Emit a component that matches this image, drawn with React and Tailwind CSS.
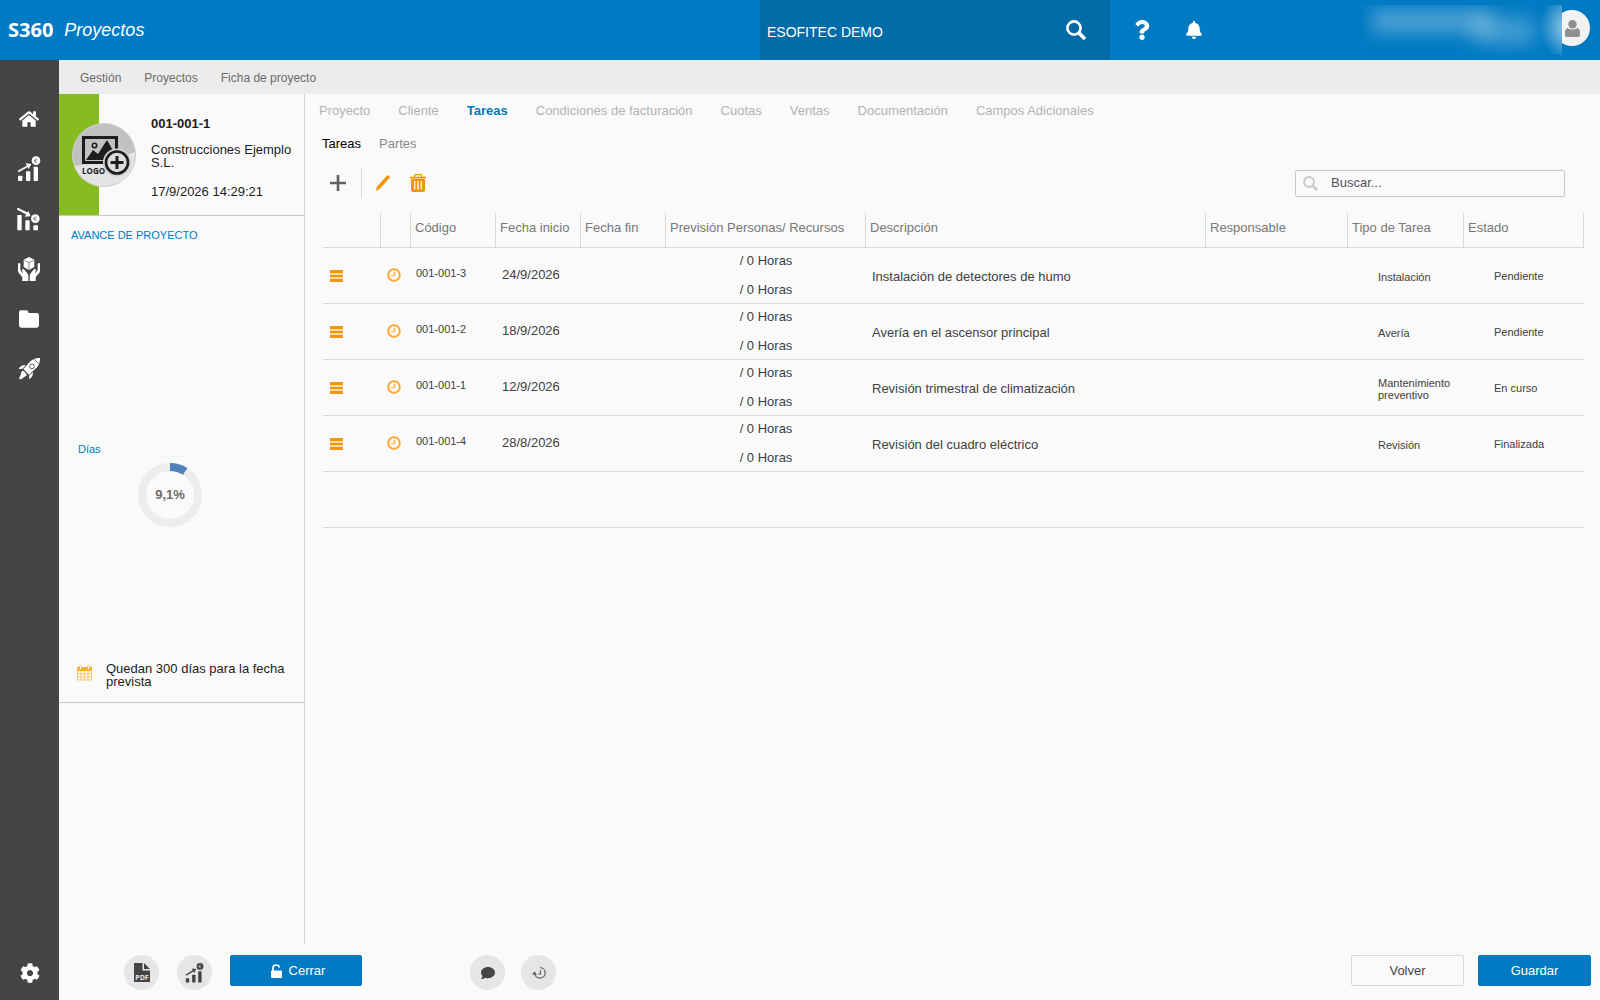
import React from "react";
import { FaHome, FaQuestion, FaBell, FaComment, FaCog } from "react-icons/fa";

function BarsUpIcon({ coinText = "#454545", className }) {
  return (
    <svg viewBox="0 0 72 76" className={className} fill="currentColor" aria-hidden="true">
      <rect x="3" y="58" width="13" height="16" rx="2" />
      <rect x="27" y="45" width="13" height="29" rx="2" />
      <rect x="50" y="31" width="13" height="43" rx="2" />
      <path d="M5 45 34 28" stroke="currentColor" strokeWidth="5" strokeLinecap="round" />
      <path d="M26 21l17 2-8 15z" />
      <circle cx="57" cy="13" r="13" />
      <path d="M61 9a5 5 0 1 0 0 8M51 13h7" fill="none" stroke={coinText} strokeWidth="2" />
    </svg>
  );
}

function BarsDownIcon({ className }) {
  return (
    <svg viewBox="0 0 72 76" className={className} fill="currentColor" aria-hidden="true">
      <rect x="1" y="26" width="13" height="46" rx="2" />
      <rect x="25" y="42" width="13" height="30" rx="2" />
      <rect x="49" y="57" width="14" height="15" rx="2" />
      <path d="M3 8 33 23" stroke="currentColor" strokeWidth="6" strokeLinecap="round" />
      <path d="M34 14l7 16-18 1z" />
      <circle cx="55" cy="37" r="15" fill="#454545" />
      <circle cx="55" cy="37" r="13" />
      <path d="M59 33a5 5 0 1 0 0 8M49 37h7" fill="none" stroke="#454545" strokeWidth="2" />
    </svg>
  );
}

function HandsIcon({ className }) {
  return (
    <svg viewBox="0 0 66 72" className={className} fill="currentColor" aria-hidden="true">
      <path d="M33 0 49 8v22L33 39 17 30V8z" />
      <path d="M19 10l14 7 14-7M33 17v21" fill="none" stroke="#454545" strokeWidth="1.800" />
      <path d="M0 22q0-4 3.500-4T7 22v17l6 8q1 1 2-1l-3-5q-1-4 3-5 2-1 5 3l8 10q3 4 3 9v14H13V61L2 47Q0 45 0 41z" />
      <path d="M66 22q0-4-3.500-4T59 22v17l-6 8q-1 1-2-1l3-5q1-4-3-5-2-1-5 3l-8 10q-3 4-3 9v14h18V61l11-14q2-2 2-6z" />
    </svg>
  );
}

function FolderIcon({ className }) {
  return (
    <svg viewBox="0 0 60 52" className={className} fill="currentColor" aria-hidden="true">
      <path d="M6 0h16q5 0 6 5l1 3h24q7 0 7 7v29q0 8-8 8H8q-8 0-8-8V6q0-6 6-6z" />
    </svg>
  );
}

function RocketIcon({ className }) {
  return (
    <svg viewBox="0 0 66 66" className={className} fill="currentColor" aria-hidden="true">
      <path d="M66 0q1 17-9 28L33 50 16 33 38 9Q48-1 66 0z" />
      <path d="M48 3l15 15" stroke="#454545" strokeWidth="2" />
      <circle cx="42" cy="25" r="7" fill="none" stroke="#454545" strokeWidth="2.500" />
      <path d="M23 21 14 32 2 33Q7 21 23 21zM45 43 34 52l-1 12Q45 58 45 43z" />
      <path d="M13 38q4 0 8 5t5 8q-2 6-7 5-6 8-15 8 0-9 5-15-1-7 4-11z" />
    </svg>
  );
}

function SearchIcon({ className }) {
  return (
    <svg viewBox="0 0 20 20" className={className} fill="none" stroke="currentColor" aria-hidden="true">
      <circle cx="8" cy="8" r="6.600" strokeWidth="2.600" />
      <path d="M13 13l6 6" strokeWidth="3.600" />
    </svg>
  );
}

function PersonIcon({ className }) {
  return (
    <svg viewBox="0 0 15 17" className={className} fill="currentColor" aria-hidden="true">
      <circle cx="7.500" cy="4.200" r="4.200" />
      <path d="M2.500 8Q7.500 11 12.500 8 15 9 15 12.500V15q0 2-2 2H2q-2 0-2-2v-2.500Q0 9 2.500 8z" />
    </svg>
  );
}

function LogoPlaceholder({ className }) {
  return (
    <svg viewBox="0 0 64 64" className={className} role="img" aria-label="Añadir logo">
      <circle cx="32" cy="32" r="31.500" fill="#c1c1c1" />
      <path d="M2 43Q32 40 63 29A31.500 31.500 0 0 1 2 43z" fill="#e4e4e4" />
      <circle cx="32" cy="32" r="31.500" fill="none" stroke="#cfcfcf" />
      <rect x="11.500" y="14.500" width="33" height="25" fill="none" stroke="#1d1d1b" strokeWidth="3" />
      <path d="M14 37l7-10 5 4 9-14 8 14v6z" fill="#1d1d1b" />
      <circle cx="22.500" cy="22.500" r="2.200" fill="none" stroke="#1d1d1b" strokeWidth="1.500" />
      <circle cx="45" cy="39.500" r="14" fill="#d0d0d0" />
      <circle cx="45" cy="39.500" r="11" fill="#dcdcdc" stroke="#1d1d1b" strokeWidth="2.600" />
      <path d="M45 33v13M38.500 39.500h13" stroke="#1d1d1b" strokeWidth="3" />
      <text x="10" y="51" fontSize="8" fontWeight="700" fontFamily="Open Sans, sans-serif" fill="#1d1d1b">LOGO</text>
    </svg>
  );
}

function CalendarIcon({ className }) {
  return (
    <svg viewBox="0 0 16 16" className={className} aria-hidden="true">
      <path d="M0 2h15v4H0z" fill="#ffab2e" />
      <path d="M.5 6v9h14V6M0 9h15M0 12h15M4 6v9M7.500 6v9M11 6v9" fill="none" stroke="#ffc670" />
      <rect x="2.500" y=".5" width="2" height="4" rx="1" fill="#fff" stroke="#ffab2e" strokeWidth=".8" />
      <rect x="10.500" y=".5" width="2" height="4" rx="1" fill="#fff" stroke="#ffab2e" strokeWidth=".8" />
    </svg>
  );
}

function ClockIcon({ className }) {
  return (
    <svg viewBox="0 0 14 14" className={className} fill="none" aria-hidden="true">
      <circle cx="7" cy="7" r="5.800" stroke="#ffa82a" strokeWidth="2" />
      <path d="M7.500 3.500v4H4.600" stroke="#ffbe60" strokeWidth="1.600" />
    </svg>
  );
}

function MenuIcon({ className }) {
  return (
    <svg viewBox="0 0 13 12" className={className} aria-hidden="true">
      <path d="M0 0h13v12H0z" fill="#fbdba6" />
      <path d="M0 0h13v3H0zM0 5h13v2H0zM0 9h13v3H0z" fill="#f09609" />
    </svg>
  );
}

function PencilIcon({ className }) {
  return (
    <svg viewBox="0 0 14 16" className={className} fill="#f09609" aria-hidden="true">
      <path d="M0 16l.8-4L10.800.8q1.200-1 2.300 0t.4 2.200L3.500 14z" />
    </svg>
  );
}

function TrashIcon({ className }) {
  return (
    <svg viewBox="0 0 16 18" className={className} fill="#f09609" aria-hidden="true">
      <path d="M4.500 3V1.200Q4.500.7 5.500.7h5q1 0 1 .7V3" fill="none" stroke="#f09609" strokeWidth="1.300" />
      <path d="M0 2.700h16v1.800H0z" />
      <path fillRule="evenodd" d="M1 5h14V16q0 2-2 2H3q-2 0-2-2zM4 7v8.500h1.300V7zm3.300 0v8.500h1.400V7zm3.400 0v8.500H12V7z" />
    </svg>
  );
}

function PlusIcon({ className }) {
  return (
    <svg viewBox="0 0 16 16" className={className} fill="#606060" aria-hidden="true">
      <path d="M6.700 0h2.600v6.700H16v2.600H9.300V16H6.700V9.300H0V6.700h6.700z" />
    </svg>
  );
}

function PdfIcon({ className }) {
  return (
    <svg viewBox="0 0 16 19" className={className} fill="#454545" aria-hidden="true">
      <path d="M0 0h8.500v7.500H16V19H0zM10 0l6 6h-6z" />
      <text x="8" y="16.500" textAnchor="middle" fontSize="7" fontWeight="700" fontFamily="Open Sans, sans-serif" fill="#e6e6e6">PDF</text>
    </svg>
  );
}

function UnlockIcon({ className }) {
  return (
    <svg viewBox="0 0 11 14" className={className} fill="#fff" aria-hidden="true">
      <rect y="6.500" width="11" height="7.500" rx=".8" />
      <path d="M2 7V4q0-3 3.300-3 2.700 0 3 2.500" fill="none" stroke="#fff" strokeWidth="1.700" />
    </svg>
  );
}

function HistoryIcon({ className }) {
  return (
    <svg viewBox="0 0 14 14" className={className} fill="none" stroke="#666" aria-hidden="true">
      <path d="M8 1.700A5.200 5.200 0 1 1 2.800 7.500" strokeWidth="1.300" />
      <path d="M8.500 4v4H6" strokeWidth="1.200" />
      <path d="M0 8.500l2.500-3 2.500 3z" fill="#555" stroke="none" />
    </svg>
  );
}

function DaysDonut({ percent, label }) {
  const radius = 28;
  const length = 2 * Math.PI * radius;
  return (
    <svg viewBox="0 0 64 64" className="size-16" role="img" aria-label={`Días ${label}`}>
      <circle cx="32" cy="32" r={radius} fill="none" stroke="#ededed" strokeWidth="8" />
      <circle
        cx="32"
        cy="32"
        r={radius}
        fill="none"
        stroke="#4f81bd"
        strokeWidth="8"
        strokeDasharray={`${(length * percent) / 100} ${length}`}
        transform="rotate(-90 32 32)"
      />
      <text x="32" y="36" textAnchor="middle" fontSize="13" fontWeight="700" fill="#6b6b6b">{label}</text>
    </svg>
  );
}

const sideLinks = [
  { label: "Inicio", icon: <FaHome className="size-5" /> },
  { label: "Ventas", icon: <BarsUpIcon className="h-[26px] w-6" /> },
  { label: "Compras", icon: <BarsDownIcon className="h-[26px] w-6" /> },
  { label: "Almacén", icon: <HandsIcon className="h-6 w-[22px]" /> },
  { label: "Documentos", icon: <FolderIcon className="h-[18px] w-5" /> },
  { label: "Proyectos", icon: <RocketIcon className="size-[22px]" /> },
];

const tabs = ["Proyecto", "Cliente", "Tareas", "Condiciones de facturación", "Cuotas", "Ventas", "Documentación", "Campos Adicionales"];

const headers = ["", "", "Código", "Fecha inicio", "Fecha fin", "Previsión Personas/ Recursos", "Descripción", "Responsable", "Tipo de Tarea", "Estado"];

const tasks = [
  { code: "001-001-3", start: "24/9/2026", text: "Instalación de detectores de humo", type: "Instalación", state: "Pendiente" },
  { code: "001-001-2", start: "18/9/2026", text: "Avería en el ascensor principal", type: "Avería", state: "Pendiente" },
  { code: "001-001-1", start: "12/9/2026", text: "Revisión trimestral de climatización", type: "Mantenimiento preventivo", state: "En curso" },
  { code: "001-001-4", start: "28/8/2026", text: "Revisión del cuadro eléctrico", type: "Revisión", state: "Finalizada" },
];

function Header() {
  return (
    <header className="flex h-[60px] shrink-0 bg-[#007ac3] text-white">
      <div className="flex flex-1 items-center gap-[11px] pl-2">
        <span className="font-['Noto_Sans'] text-xl font-bold">S360</span>
        <h1 className="text-lg italic">Proyectos</h1>
      </div>
      <form className="flex w-[350px] items-center bg-[#036ca6] pr-6 pl-[7px]" onSubmit={(e) => e.preventDefault()}>
        <input aria-label="Empresa" defaultValue="ESOFITEC DEMO" className="mt-1 min-w-0 flex-1 bg-transparent text-sm text-white outline-none" />
        <button type="submit" aria-label="Buscar">
          <SearchIcon className="size-5" />
        </button>
      </form>
      <div className="flex w-[490px] items-center pr-[10px]">
        <button type="button" aria-label="Ayuda" className="ml-[22px]">
          <FaQuestion className="size-5" />
        </button>
        <button type="button" aria-label="Notificaciones" className="ml-[33px]">
          <FaBell className="size-[18px]" />
        </button>
        <div className="flex-1" />
        <div className="z-10 flex h-[50px] w-[200px] overflow-hidden bg-[#007ac3] bg-[radial-gradient(26px_34px_at_204px_22px,rgba(255,255,255,0.6),transparent)]" aria-hidden="true">
          <div className="mt-1 ml-2 h-6 w-[125px] shrink-0 rounded-full bg-white/30 blur-[9px]" />
          <div className="mt-3 -ml-6 h-7 w-[66px] shrink-0 rounded-full bg-white/25 blur-[9px]" />
        </div>
        <button type="button" aria-label="Usuario" className="mb-1 -ml-2 flex size-9 items-center justify-center rounded-full bg-[#f2f2f2] pl-px text-[#8f8f8f]">
          <PersonIcon className="h-[17px] w-[15px]" />
        </button>
      </div>
    </header>
  );
}

function Sidebar() {
  return (
    <nav className="flex w-[59px] shrink-0 flex-col items-center bg-[#454545] pt-[34px] pb-[2px] text-white">
      {sideLinks.map((link) => (
        <a key={link.label} href="#" aria-label={link.label} className="flex h-[50px] w-full items-center justify-center pr-px">
          {link.icon}
        </a>
      ))}
      <a href="#" aria-label="Configuración" className="mt-auto flex h-[50px] w-full items-center justify-center">
        <FaCog className="size-5" />
      </a>
    </nav>
  );
}

function ProjectPanel() {
  return (
    <aside className="w-[246px] shrink-0 border-r border-[#d3d3d3] text-[#1c1c1c]">
      <section className="flex h-[122px] border-b border-[#c8c8c8]">
        <div className="w-10 shrink-0 bg-[#86bc20]" />
        <LogoPlaceholder className="-ml-[27px] mt-[29px] size-16 shrink-0" />
        <div className="ml-[15px] flex-1 pt-[23px] leading-[13px]">
          <p className="font-bold">001-001-1</p>
          <p className="mt-[13px]">Construcciones Ejemplo S.L.</p>
          <p className="mt-4">17/9/2026 14:29:21</p>
        </div>
      </section>
      <section className="border-b border-[#c8c8c8] pb-[14px]">
        <h2 className="pt-[11px] pl-3 text-[11px] leading-4 text-[#007ac3]">AVANCE DE PROYECTO</h2>
        <div className="mt-[200px] mr-9 ml-3 border-b border-[#f5f5f5] pl-[7px] text-[11px] leading-[13px] text-[#007ac3]">Días</div>
        <div className="mt-[6px] ml-[79px]">
          <DaysDonut percent={9.1} label="9,1%" />
        </div>
        <div className="mt-[135px] flex gap-[13px] pl-[18px]">
          <CalendarIcon className="mt-[3px] size-4 shrink-0" />
          <p className="leading-[13px]">Quedan 300 días para la fecha prevista</p>
        </div>
      </section>
    </aside>
  );
}

function TaskTable() {
  return (
    <table className="w-full table-fixed border-separate border-spacing-0 text-left text-[#404040]">
      <colgroup>
        <col className="w-[57px]" />
        <col className="w-[30px]" />
        <col className="w-[85px]" />
        <col className="w-[85px]" />
        <col className="w-[85px]" />
        <col className="w-[200px]" />
        <col />
        <col className="w-[142px]" />
        <col className="w-[116px]" />
        <col className="w-[121px]" />
      </colgroup>
      <thead>
        <tr className="text-[#777]">
          {headers.map((name, i) => (
            <th
              key={i}
              className="h-[35px] border-b border-l border-[#d8d8d8] pb-1 pl-1 font-normal whitespace-nowrap first:border-l-0 last:border-r"
            >
              {name}
            </th>
          ))}
        </tr>
      </thead>
      <tbody>
        {tasks.map((t) => (
          <tr key={t.code} className="[&>td]:h-14 [&>td]:border-b [&>td]:border-[#d8d8d8]">
            <td className="pl-[7px]">
              <button type="button" aria-label={`Menú ${t.code}`} className="block">
                <MenuIcon className="h-3 w-[13px]" />
              </button>
            </td>
            <td className="pb-[2px] pl-[7px]">
              <ClockIcon className="size-[14px]" />
            </td>
            <td className="pb-1 pl-[6px] text-[11px]">{t.code}</td>
            <td className="pb-[2px] pl-[7px]">{t.start}</td>
            <td />
            <td className="pl-[2px]">
              <div className="flex flex-col items-center gap-[13px] leading-4">
                <span>/ 0 Horas</span>
                <span>/ 0 Horas</span>
              </div>
            </td>
            <td className="pt-[2px] pl-[7px]">{t.text}</td>
            <td />
            <td className="pt-[2px] pr-1 pl-[31px] text-[11px] leading-3">{t.type}</td>
            <td className="pt-[2px] pl-[31px] text-[11px]">{t.state}</td>
          </tr>
        ))}
        <tr>
          <td colSpan={10} className="h-14 border-b border-[#d8d8d8]" />
        </tr>
      </tbody>
    </table>
  );
}

function TasksView() {
  return (
    <main className="min-w-0 flex-1 pr-4 pl-[18px]">
      <nav className="-ml-1 flex gap-7 pt-[9px] leading-4 text-[#b3b3b3]">
        {tabs.map((tab) => (
          <a key={tab} href="#" className={tab === "Tareas" ? "font-bold text-[#007ac3]" : ""}>
            {tab}
          </a>
        ))}
      </nav>
      <nav className="-ml-px flex gap-[18px] pt-[17px] leading-4">
        <a href="#" className="text-black">Tareas</a>
        <a href="#" className="text-[#8a8a8a]">Partes</a>
      </nav>
      <div className="mt-4 flex h-[30px] items-center pr-[19px] pl-[7px]">
        <button type="button" aria-label="Añadir">
          <PlusIcon className="size-4" />
        </button>
        <div className="ml-[15px] h-full w-px bg-[#d8d8d8]" />
        <button type="button" aria-label="Editar" className="ml-[14px]">
          <PencilIcon className="h-4 w-[14px]" />
        </button>
        <button type="button" aria-label="Eliminar" className="ml-5">
          <TrashIcon className="h-[18px] w-4" />
        </button>
        <label className="ml-auto flex h-[27px] w-[270px] items-center rounded-[2px] border border-[#c8c8c8] pl-[7px]">
          <SearchIcon className="size-[15px] text-[#cbcbcb]" />
          <input aria-label="Buscar" placeholder="Buscar..." className="ml-[13px] min-w-0 flex-1 bg-transparent outline-none placeholder:text-[#555]" />
        </label>
      </div>
      <div className="mt-[15px]">
        <TaskTable />
      </div>
    </main>
  );
}

const roundButton = "flex size-[35px] items-center justify-center rounded-full bg-[#e6e6e6] text-[#454545]";
const wideButton = "flex h-[31px] items-center justify-center rounded-[2px] border";

function Footer() {
  return (
    <footer className="flex shrink-0 items-start pt-[11px] pr-[9px] pb-[10px] pl-[65px]">
      <button type="button" aria-label="Exportar PDF" className={roundButton}>
        <PdfIcon className="h-[19px] w-4" />
      </button>
      <button type="button" aria-label="Estadísticas" className={`ml-[18px] ${roundButton}`}>
        <BarsUpIcon coinText="#e6e6e6" className="h-5 w-[19px]" />
      </button>
      <button type="button" className={`ml-[18px] w-[132px] gap-[7px] border-[#007ac3] bg-[#007ac3] pl-1 text-white ${wideButton}`}>
        <UnlockIcon className="h-[14px] w-[11px]" />
        Cerrar
      </button>
      <button type="button" aria-label="Comentarios" className={`ml-[108px] ${roundButton}`}>
        <FaComment className="size-[14px]" />
      </button>
      <button type="button" aria-label="Historial" className={`ml-4 ${roundButton}`}>
        <HistoryIcon className="size-[14px]" />
      </button>
      <button type="button" className={`ml-auto w-[113px] border-[#d8d8d8] text-[#454545] ${wideButton}`}>Volver</button>
      <button type="button" className={`ml-[14px] w-[113px] border-[#007ac3] bg-[#007ac3] text-white ${wideButton}`}>Guardar</button>
    </footer>
  );
}

export default function App() {
  return (
    <div className="flex min-h-screen flex-col bg-[#fafafa] font-['Liberation_Sans',Arial,sans-serif] text-[13px]">
      <Header />
      <div className="flex flex-1">
        <Sidebar />
        <div className="flex min-w-0 flex-1 flex-col">
          <nav className="flex h-[34px] shrink-0 items-center gap-[23px] bg-[#ececec] pt-px pl-[21px] text-xs text-[#6b6b6b]">
            <a href="#">Gestión</a>
            <a href="#">Proyectos</a>
            <a href="#">Ficha de proyecto</a>
          </nav>
          <div className="flex flex-1">
            <ProjectPanel />
            <TasksView />
          </div>
          <Footer />
        </div>
      </div>
    </div>
  );
}
